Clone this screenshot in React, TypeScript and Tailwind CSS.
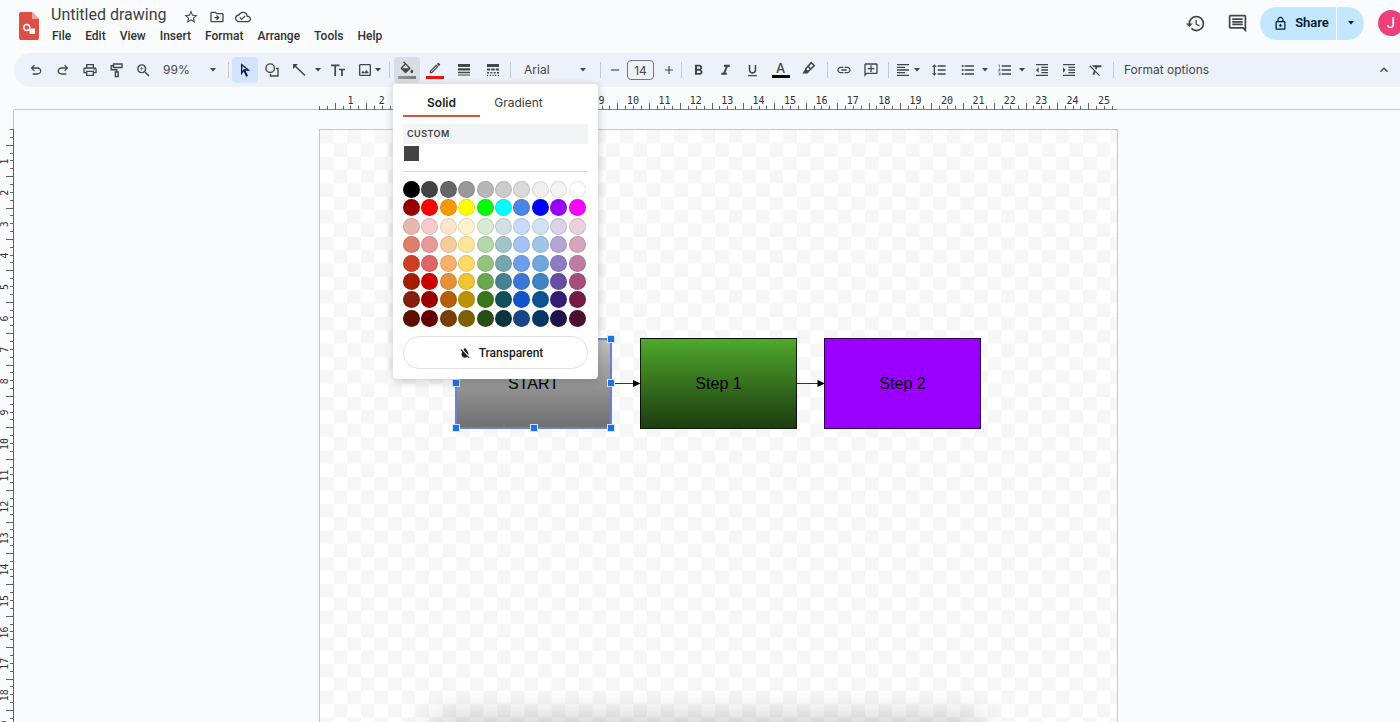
import type { ReactNode } from 'react';
import {
  MdAdd,
  MdExpandLess,
  MdFormatAlignLeft,
  MdFormatBold,
  MdFormatClear,
  MdFormatColorReset,
  MdFormatIndentDecrease,
  MdFormatIndentIncrease,
  MdFormatItalic,
  MdFormatLineSpacing,
  MdFormatListBulleted,
  MdFormatListNumbered,
  MdFormatUnderlined,
  MdHistory,
  MdLineStyle,
  MdLink,
  MdOutlineAddComment,
  MdOutlineCloudDone,
  MdOutlineComment,
  MdOutlineDriveFileMove,
  MdOutlineEdit,
  MdOutlineImage,
  MdOutlineLock,
  MdOutlinePrint,
  MdRemove,
  MdStarBorder,
  MdZoomIn,
} from 'react-icons/md';

const menus = ['File', 'Edit', 'View', 'Insert', 'Format', 'Arrange', 'Tools', 'Help'];

const palette = [
  ['#000000', '#434343', '#666666', '#999999', '#b7b7b7', '#cccccc', '#d9d9d9', '#efefef', '#f3f3f3', '#ffffff'],
  ['#980000', '#ff0000', '#ff9900', '#ffff00', '#00ff00', '#00ffff', '#4a86e8', '#0000ff', '#9900ff', '#ff00ff'],
  ['#e6b8af', '#f4cccc', '#fce5cd', '#fff2cc', '#d9ead3', '#d0e0e3', '#c9daf8', '#cfe2f3', '#d9d2e9', '#ead1dc'],
  ['#dd7e6b', '#ea9999', '#f9cb9c', '#ffe599', '#b6d7a8', '#a2c4c9', '#a4c2f4', '#9fc5e8', '#b4a7d6', '#d5a6bd'],
  ['#cc4125', '#e06666', '#f6b26b', '#ffd966', '#93c47d', '#76a5af', '#6d9eeb', '#6fa8dc', '#8e7cc3', '#c27ba0'],
  ['#a61c00', '#cc0000', '#e69138', '#f1c232', '#6aa84f', '#45818e', '#3c78d8', '#3d85c6', '#674ea7', '#a64d79'],
  ['#85200c', '#990000', '#b45f06', '#bf9000', '#38761d', '#134f5c', '#1155cc', '#0b5394', '#351c75', '#741b47'],
  ['#5b0f00', '#660000', '#783f04', '#7f6000', '#274e13', '#0c343d', '#1c4587', '#073763', '#20124d', '#4c1130'],
];

// One centimetre on the rulers at 99% zoom
const CM = 31.4;

function Glyph({ d }: { d: string }) {
  return (
    <svg viewBox="0 -960 960 960" fill="currentColor" className="size-4" aria-hidden="true">
      <path d={d} />
    </svg>
  );
}

function Caret() {
  return (
    <svg viewBox="0 0 6 4" fill="currentColor" className="h-1 w-1.5" aria-hidden="true">
      <path d="M0 0h6L3 3.6z" />
    </svg>
  );
}

function Tool({ label, className = 'w-[27px]', children }: { label: string; className?: string; children: ReactNode }) {
  return (
    <button type="button" aria-label={label} className={`flex h-[26px] shrink-0 items-center justify-center ${className}`}>
      {children}
    </button>
  );
}

function Separator({ className }: { className: string }) {
  return <span className={`h-4 w-px shrink-0 bg-[#c7cbd1] ${className}`} />;
}

function Header() {
  return (
    <header className="flex h-[53px] items-start pl-[19px] font-[Roboto,'Liberation_Sans',sans-serif]">
      <svg viewBox="0 0 20 28" className="mt-3 h-7 w-5 shrink-0" role="img" aria-label="Drawings home">
        <path d="M2 0h11l7 7v19a2 2 0 0 1-2 2H2a2 2 0 0 1-2-2V2a2 2 0 0 1 2-2z" fill="#db4f44" />
        <path d="M13 0l7 7h-7z" fill="#f0a49c" />
        <circle cx="7.8" cy="15.5" r="3" fill="none" stroke="#fff" strokeWidth="1.4" />
        <path d="M12 16.5h4V22h-5.5v-3.5z" fill="#fff" />
      </svg>
      <div className="ml-2 flex flex-col">
        <div className="flex h-[22px] items-center pt-1 pl-1">
          <h1 className="mt-1 text-base leading-6 text-[#3c4043]">Untitled drawing</h1>
          <div className="mt-2 ml-4 flex items-center gap-2.5 text-[#444746]">
            <button type="button" aria-label="Star">
              <MdStarBorder className="size-4" />
            </button>
            <button type="button" aria-label="Move">
              <MdOutlineDriveFileMove className="size-4" />
            </button>
            <button type="button" aria-label="See document status">
              <MdOutlineCloudDone className="size-4" />
            </button>
          </div>
        </div>
        <nav className="mt-1.5 flex gap-3.5 pl-[5px] text-xs leading-4 font-medium text-[#303134]">
          {menus.map((menu) => (
            <button key={menu} type="button">
              {menu}
            </button>
          ))}
        </nav>
      </div>
      <div className="-mr-1 ml-auto flex h-[46px] items-center text-[#444746]">
        <button type="button" aria-label="Version history">
          <MdHistory className="size-[21px]" />
        </button>
        <button type="button" aria-label="Comments" className="ml-[21px]">
          <MdOutlineComment className="size-[21px]" />
        </button>
        <div className="ml-3 flex h-[33px] overflow-hidden rounded-full text-[#001d35]">
          <button type="button" className="flex w-[76px] items-center justify-center gap-[7px] bg-[#c2e7ff] pl-1.5 text-[13px] font-semibold">
            <MdOutlineLock className="size-[15px]" />
            Share
          </button>
          <button type="button" aria-label="Quick sharing actions" className="ml-px flex w-[27px] items-center justify-center bg-[#c2e7ff]">
            <Caret />
          </button>
        </div>
        <button type="button" className="ml-3.5 size-[26px] rounded-full bg-[#ec407a] text-[15px] leading-6 text-white">
          J
        </button>
      </div>
    </header>
  );
}

function FillMenu() {
  return (
    <div className="absolute top-full -left-px z-20 mt-px w-[205px] rounded bg-white px-2.5 pb-2.5 text-[#3c4043] shadow-[0_2px_6px_2px_rgba(60,64,67,0.2)]">
      <div role="tablist" className="flex h-[33px] text-xs">
        <button type="button" role="tab" aria-selected="true" className="w-[77px] border-b-2 border-[#cf5148] pt-1.5 font-semibold text-[#202124]">
          Solid
        </button>
        <button type="button" role="tab" aria-selected="false" className="w-[77px] pt-1">
          Gradient
        </button>
      </div>
      <h2 className="mt-[7px] bg-[#f1f3f4] px-1 text-[9px] leading-5 font-semibold tracking-wider">CUSTOM</h2>
      <button type="button" aria-label="Custom dark gray" className="mt-0.5 ml-px block size-[15px] bg-[#434343]" />
      <hr className="mt-2.5 border-[#d5d7da]" />
      <div className="mt-[9px] grid h-[147px] w-[184px] grid-cols-10 grid-rows-8">
        {palette.flat().map((color) => (
          <button
            key={color}
            type="button"
            aria-label={color}
            className="size-[17px] rounded-full border border-black/10"
            style={{ backgroundColor: color }}
          />
        ))}
      </div>
      <button
        type="button"
        className="mt-2 flex h-[33px] w-full items-center justify-center gap-[7px] rounded-2xl border border-[#e0e2e5] pl-2.5 font-[Roboto,'Liberation_Sans',sans-serif] text-xs font-medium text-[#202124]"
      >
        <MdFormatColorReset className="size-3.5" />
        Transparent
      </button>
    </div>
  );
}

function Toolbar() {
  return (
    <div role="toolbar" className="ml-3.5 flex h-[34px] items-center rounded-l-full rounded-r-2xl bg-[#edf2fa] pl-2 text-xs text-[#444746]">
      <Tool label="Undo">
        <Glyph d="M280-200v-80h284q63 0 109.5-40T720-420t-46.500-100T564-560H312l104 104-56 56-200-200 200-200 56 56-104 104h252q97 0 169.500 63T800-420t-72.500 157T564-200H280Z" />
      </Tool>
      <Tool label="Redo">
        <Glyph d="M396-200q-97 0-169.500-63T154-420t72.500-157T396-640h252L544-744l56-56 200 200-200 200-56-56 104-104H396q-63 0-109.500 40T240-420t46.500 100T396-280h284v80H396Z" />
      </Tool>
      <Tool label="Print">
        <MdOutlinePrint className="size-4" />
      </Tool>
      <Tool label="Paint format">
        <svg viewBox="0 0 16 16" fill="none" stroke="currentColor" strokeWidth="1.4" className="size-4" aria-hidden="true">
          <path d="M4.500 2h8.500v3.500H4.500zM4.500 3.700H2.200v4.100h5.600v2.200M6.400 10h2.800v4.500H6.400z" />
        </svg>
      </Tool>
      <Tool label="Zoom in">
        <MdZoomIn className="size-[17px]" />
      </Tool>
      <div className="relative flex w-[65px] items-center">
        <select aria-label="Zoom" className="w-full appearance-none bg-transparent pl-1.5">
          <option>99%</option>
        </select>
        <span className="pointer-events-none absolute right-1.5">
          <Caret />
        </span>
      </div>
      <Separator className="mr-[3px] ml-1.5" />
      <Tool label="Select" className="w-[26px] rounded-sm bg-[#d3e3fd] text-[#041e49]">
        <Glyph d="m320-410 79-110h170L320-716v306ZM551-80 406-392 240-160v-720l560 440H516l144 309-109 51ZM399-520Z" />
      </Tool>
      <Tool label="Shape">
        <svg viewBox="0 0 16 16" fill="none" stroke="currentColor" strokeWidth="1.400" className="size-4" aria-hidden="true">
          <circle cx="6.200" cy="6.200" r="4.300" />
          <path d="M12 6.500h2v7.500H6.500v-2" />
        </svg>
      </Tool>
      <Tool label="Line">
        <svg viewBox="0 0 16 16" fill="none" stroke="currentColor" strokeWidth="1.600" className="size-4" aria-hidden="true">
          <path d="M3 3l11 10.500" />
          <path d="M2 2h5L2 7z" fill="currentColor" stroke="none" />
        </svg>
      </Tool>
      <Tool label="More lines" className="w-3">
        <Caret />
      </Tool>
      <Tool label="Text box">
        <svg viewBox="0 0 16 16" fill="none" stroke="currentColor" strokeWidth="1.700" className="size-4" aria-hidden="true">
          <path d="M1 3.300h8.500M5.200 3.300V14M9 7.500h6M12 7.500V14" />
        </svg>
      </Tool>
      <Tool label="Image">
        <MdOutlineImage className="size-4" />
      </Tool>
      <Tool label="More images" className="-ml-1.5 w-3">
        <Caret />
      </Tool>
      <Separator className="mr-1 ml-[5px]" />
      <div className="relative">
        <Tool label="Fill color" className="w-[26px] flex-col rounded-sm bg-[#d9dde4]">
          <svg viewBox="2 0 20 18" fill="currentColor" className="h-[13px] w-3.5" aria-hidden="true">
            <path d="M16.560 8.940L7.620 0 6.210 1.410l2.380 2.380-5.150 5.150c-.59.59-.59 1.540 0 2.120l5.500 5.500c.29.29.68.44 1.060.44s.77-.15 1.060-.44l5.500-5.500c.59-.58.59-1.530 0-2.120zM5.210 10L10 5.210 14.790 10H5.210zM19 11.500s-2 2.170-2 3.500c0 1.100.9 2 2 2s2-.9 2-2c0-1.330-2-3.500-2-3.500z" />
          </svg>
          <span className="mt-0.5 h-[3px] w-[18px] bg-linear-to-r from-[#999] to-[#777]" />
        </Tool>
        <FillMenu />
      </div>
      <Tool label="Border color" className="w-[29px] flex-col">
        <MdOutlineEdit className="size-3.5" />
        <span className="mt-px h-[3px] w-[18px] bg-[#ee1111]" />
      </Tool>
      <Tool label="Border weight" className="w-[29px]">
        <svg viewBox="0 0 12 12" fill="currentColor" className="size-3" aria-hidden="true">
          <path d="M0 0h12v3H0zM0 4.200h12v2.300H0zM0 7.700h12v1.600H0zM0 10.500h12v1H0z" />
        </svg>
      </Tool>
      <Tool label="Border dash" className="w-[29px]">
        <svg viewBox="0 0 12 12" fill="currentColor" className="size-3" aria-hidden="true">
          <path d="M0 0h12v3H0zM0 4.500h3.300v2H0zM4.300 4.500h3.400v2H4.300zM8.700 4.500H12v2H8.700zM0 8h2v1.500H0zM3.300 8h2v1.500h-2zM6.700 8h2v1.500h-2zM10 8h2v1.500h-2zM0 10.700h1.200v1.200H0zM2.700 10.700h1.200v1.200H2.700zM5.400 10.700h1.200v1.200H5.400zM8.100 10.700h1.200v1.200H8.100zM10.800 10.700H12v1.200h-1.200z" />
        </svg>
      </Tool>
      <Separator className="ml-[3px]" />
      <div className="relative flex w-[83px] items-center">
        <select aria-label="Font" className="w-full appearance-none bg-transparent pl-[13px]">
          <option>Arial</option>
        </select>
        <span className="pointer-events-none absolute right-2">
          <Caret />
        </span>
      </div>
      <Separator className="mr-0.5 ml-1.5" />
      <Tool label="Decrease font size" className="w-6">
        <MdRemove className="size-3.5" />
      </Tool>
      <input aria-label="Font size" defaultValue="14" className="h-5 w-[27px] rounded border border-[#747775] text-center text-xs" />
      <Tool label="Increase font size" className="w-[27px] pl-0.5">
        <MdAdd className="size-3.5" />
      </Tool>
      <Separator className="mr-[3px]" />
      <Tool label="Bold">
        <MdFormatBold className="size-[17px]" />
      </Tool>
      <Tool label="Italic">
        <MdFormatItalic className="size-[17px]" />
      </Tool>
      <Tool label="Underline">
        <MdFormatUnderlined className="size-[15px]" />
      </Tool>
      <Tool label="Text color" className="w-[29px] flex-col">
        <span className="text-[13px] leading-[13px] font-medium">A</span>
        <span className="h-[3px] w-[18px] bg-black" />
      </Tool>
      <Tool label="Highlight color" className="w-[27px] pb-1">
        <svg viewBox="0 0 16 16" fill="none" stroke="currentColor" strokeWidth="1.800" className="size-3.5" aria-hidden="true">
          <path d="M4.500 8.500l6-6.500 3.500 3.500-6.500 6-3 .5z" />
          <path d="M7 6l3 3M4.500 9.500L2 13.500h4l1.500-2" fill="currentColor" />
        </svg>
      </Tool>
      <Separator className="mr-0.5 ml-[5px]" />
      <Tool label="Insert link">
        <MdLink className="size-4" />
      </Tool>
      <Tool label="Add comment">
        <MdOutlineAddComment className="size-4 -scale-x-100" />
      </Tool>
      <Separator className="ml-1" />
      <Tool label="Align">
        <MdFormatAlignLeft className="size-4" />
      </Tool>
      <Tool label="More alignment" className="-ml-[5px] w-3">
        <Caret />
      </Tool>
      <Tool label="Line spacing" className="ml-0.5 w-[27px]">
        <MdFormatLineSpacing className="size-4" />
      </Tool>
      <Tool label="Bulleted list" className="ml-0.5 w-[27px]">
        <MdFormatListBulleted className="size-4" />
      </Tool>
      <Tool label="More bullets" className="-ml-0.5 w-3">
        <Caret />
      </Tool>
      <Tool label="Numbered list">
        <MdFormatListNumbered className="size-4" />
      </Tool>
      <Tool label="More numbering" className="-ml-0.5 w-3">
        <Caret />
      </Tool>
      <Tool label="Decrease indent">
        <MdFormatIndentDecrease className="size-4" />
      </Tool>
      <Tool label="Increase indent">
        <MdFormatIndentIncrease className="size-4" />
      </Tool>
      <Tool label="Clear formatting">
        <MdFormatClear className="size-4" />
      </Tool>
      <Separator className="ml-1" />
      <button type="button" className="px-2.5 whitespace-nowrap">
        Format options
      </button>
      <Tool label="Hide the menus" className="ml-auto w-8">
        <MdExpandLess className="size-4" />
      </Tool>
    </div>
  );
}

function HorizontalRuler() {
  const ticks = Array.from({ length: 102 }, (_, i) => i);
  return (
    <div className="ml-3.5 flex h-[23px] justify-center border-b border-[#c4c7c5] pl-[23px]">
      <svg className="h-[23px] w-[799px] shrink-0" aria-hidden="true">
        <path d="M0 22.500h798" stroke="#80868b" />
        {ticks.map((i) => (
          <path key={i} d={`M${Math.round((i * CM) / 4) + 0.5} ${i % 4 === 2 ? 16 : 19}V23`} stroke="#5f6368" />
        ))}
        {ticks.slice(1, 26).map((n) => (
          <text key={n} x={n * CM} y="17" textAnchor="middle" className="fill-[#303134] font-['DejaVu_Sans_Mono',monospace] text-[10px]">
            {n}
          </text>
        ))}
      </svg>
    </div>
  );
}

function VerticalRuler() {
  const ticks = Array.from({ length: 84 }, (_, i) => i);
  return (
    <svg className="h-full w-3.5 shrink-0" aria-hidden="true">
      <path d="M13.500 0v20" stroke="#c4c7c5" />
      <path d="M13.500 20v700" stroke="#5f6368" />
      {ticks.map((i) => (
        <path key={i} d={`M${i % 4 === 2 ? 6 : 10} ${Math.round((i * CM) / 4) + 19.5}H14`} stroke="#5f6368" />
      ))}
      {ticks.slice(1, 20).map((n) => (
        <text
          key={n}
          textAnchor="middle"
          transform={`translate(8 ${n * CM + 20}) rotate(-90)`}
          className="fill-[#303134] font-['DejaVu_Sans_Mono',monospace] text-[10px]"
        >
          {n}
        </text>
      ))}
    </svg>
  );
}

function Handle({ className }: { className: string }) {
  return <span className={`absolute size-2 border border-[#d2e3fc] bg-[#1a73e8] ${className}`} />;
}

function Page() {
  return (
    <div className="relative mt-[19px] w-[799px] shrink-0 border border-b-0 border-[#c4c7c5] bg-white">
      <svg className="absolute inset-0 size-full" aria-hidden="true">
        <defs>
          <pattern id="checker" width="27.250" height="26.700" patternUnits="userSpaceOnUse">
            <path d="M0 0h13.625v13.350H0zM13.625 13.350H27.250V26.700H13.625z" fill="#f6f6f6" />
          </pattern>
        </defs>
        <rect width="100%" height="100%" fill="url(#checker)" />
        <path d="M292 253.500h24M476 253.500h24" stroke="#333" />
        <path d="M313 250l7.500 3.500-7.500 3.500zM497.500 250l7.500 3.500-7.500 3.500z" />
      </svg>
      <div className="absolute top-[208px] left-[135px] flex h-[91px] w-[157px] items-center justify-center border-2 border-[#6c7fd0] bg-linear-to-b from-[#bdbdbd] to-[#707070]">
        START
        <Handle className="-top-[5px] -right-[5px]" />
        <Handle className="top-[39px] -right-[5px]" />
        <Handle className="-right-[5px] -bottom-[5px]" />
        <Handle className="-bottom-[5px] left-[73px]" />
        <Handle className="-bottom-[5px] -left-[5px]" />
        <Handle className="top-[39px] -left-[5px]" />
      </div>
      <div className="absolute top-[208px] left-80 flex h-[91px] w-[157px] items-center justify-center border border-black/80 bg-linear-to-b from-[#50a92b] to-[#1d3d10]">
        Step 1
      </div>
      <div className="absolute top-[208px] left-[504px] flex h-[91px] w-[157px] items-center justify-center border border-[#2d004d] bg-[#9900ff]">
        Step 2
      </div>
      {/* Soft shade of the panel that sits just under the bottom edge */}
      <div className="absolute right-[145px] -bottom-5 left-[120px] h-4 shadow-[0_0_32px_8px_rgba(0,0,0,0.22)]" />
    </div>
  );
}

export default function App() {
  return (
    <div className="flex h-screen flex-col overflow-hidden bg-[#f9fbfd] font-[Inter,'Liberation_Sans',sans-serif]">
      <Header />
      <Toolbar />
      <HorizontalRuler />
      <main className="flex min-h-0 flex-1">
        <VerticalRuler />
        <div className="flex flex-1 justify-center overflow-hidden pl-[23px] font-['Liberation_Sans',Arial,sans-serif] text-base text-black">
          <Page />
        </div>
      </main>
    </div>
  );
}
